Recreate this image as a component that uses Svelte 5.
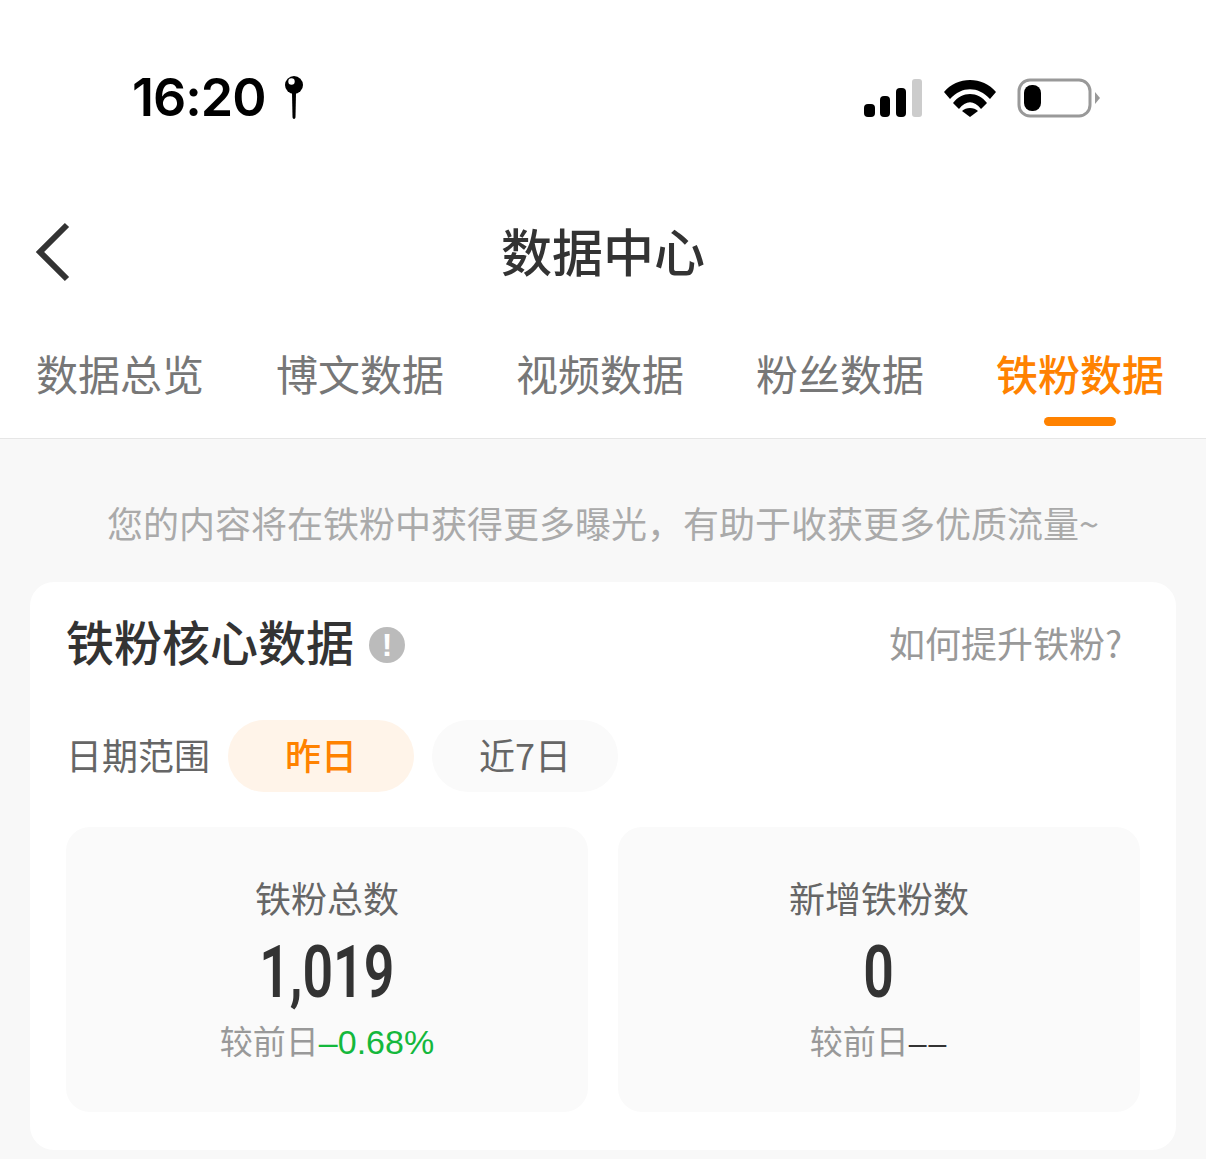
<script>
  const tabs = ['数据总览', '博文数据', '视频数据', '粉丝数据', '铁粉数据'];
  const activeTab = 4;
</script>

<div class="page">
  <div class="status">
    <div class="time">
      <span>16:20</span>
      <svg width="20" height="46" viewBox="0 0 20 46">
        <path d="M8 18h4l-.5 24c-.1 2.600-2.900 2.600-3 0z" fill="#000" />
        <circle cx="10" cy="10" r="9" fill="#000" />
        <circle cx="7.500" cy="6.500" r="3.200" fill="#fff" />
      </svg>
    </div>
    <div class="indicators">
      <svg width="60" height="38" viewBox="0 0 60 38">
        <rect x="1" y="25" width="11" height="13" rx="4" fill="#000" />
        <rect x="17" y="17" width="10" height="21" rx="4" fill="#000" />
        <rect x="33" y="9" width="10" height="29" rx="4" fill="#000" />
        <rect x="49" y="0" width="10" height="38" rx="3" fill="#ccc" />
      </svg>
      <svg width="52" height="38" viewBox="0 0 52 38">
        <path d="M0 13C13-3 39-3 52 13l-6 7C34 7 18 7 6 20z" fill="#000" />
        <path d="M9 24C18 12 34 12 43 24l-6 6C30 21 22 21 15 30z" fill="#000" />
        <path d="M18 32c4-4 12-4 16 0l-8 6z" fill="#000" />
      </svg>
      <svg class="battery" width="84" height="40" viewBox="0 0 84 40">
        <rect x="2" y="2" width="71" height="36" rx="11" fill="#fff" stroke="#999" stroke-width="3" />
        <rect x="7" y="7" width="17" height="26" rx="8" fill="#000" />
        <path d="M78 14l5 6-5 6z" fill="#999" />
      </svg>
    </div>
  </div>

  <header class="nav">
    <svg class="back" width="36" height="60" viewBox="0 0 36 60">
      <path d="M32 3L5 30l27 27" fill="none" stroke="#333" stroke-width="6" />
    </svg>
    <h1>数据中心</h1>
  </header>

  <nav class="tabs">
    {#each tabs as tab, i}
      <div class="tab" class:active={i === activeTab}>{tab}</div>
    {/each}
  </nav>

  <main class="content">
    <p class="notice">您的内容将在铁粉中获得更多曝光，有助于收获更多优质流量~</p>

    <section class="card">
      <div class="card-head">
        <div class="card-title">
          <h2>铁粉核心数据</h2>
          <span class="info">!</span>
        </div>
        <span class="help">如何提升铁粉?</span>
      </div>

      <div class="range">
        <span class="range-label">日期范围</span>
        <span class="pill on">昨日</span>
        <span class="pill">近7日</span>
      </div>

      <div class="stats">
        <div class="stat">
          <div class="stat-name">铁粉总数</div>
          <div class="stat-num"><span>1,019</span></div>
          <div class="stat-sub">较前日<span class="down">–0.68%</span></div>
        </div>
        <div class="stat">
          <div class="stat-name">新增铁粉数</div>
          <div class="stat-num"><span>0</span></div>
          <div class="stat-sub">较前日<span class="none">––</span></div>
        </div>
      </div>
    </section>
  </main>
</div>

<style>
  :global(body) {
    background: #f8f8f8;
  }

  .page {
    width: 1206px;
    height: 1159px;
    overflow: hidden;
    font-family: "Noto Sans CJK SC", "Noto Sans", sans-serif;
    color: #333;
  }

  .status {
    height: 195px;
    padding: 0 107px 0 132px;
    box-sizing: border-box;
    background: #fff;
    display: flex;
    justify-content: space-between;
    align-items: flex-start;
  }

  .time {
    margin-top: 67px;
    display: flex;
    align-items: center;
    gap: 18px;
    font: 600 52px/62px Inter, "Liberation Sans", sans-serif;
    letter-spacing: -1px;
    color: #000;
  }

  .indicators {
    margin-top: 78px;
    display: flex;
    align-items: center;
    gap: 21px;
  }

  .battery {
    margin-right: -2px;
  }

  .nav {
    height: 117px;
    background: #fff;
    display: flex;
    justify-content: center;
    position: relative;
  }

  .back {
    position: absolute;
    left: 35px;
    top: 27px;
  }

  h1 {
    margin: 0;
    font-size: 51px;
    font-weight: 500;
    line-height: 111px;
  }

  .tabs {
    height: 127px;
    box-sizing: border-box;
    background: #fff;
    border-bottom: 1px solid #e6e6e6;
    padding: 0 42px 0 36px;
    display: flex;
    justify-content: space-between;
  }

  .tab {
    width: 168px;
    height: 126px;
    box-sizing: border-box;
    padding-top: 30px;
    text-align: center;
    font-size: 42px;
    line-height: 62px;
    color: #777;
    position: relative;
  }

  .tab.active {
    color: #ff8200;
    font-weight: 500;
  }

  .tab.active::after {
    content: "";
    position: absolute;
    left: 48px;
    width: 72px;
    top: 105px;
    height: 9px;
    border-radius: 5px;
    background: #ff8200;
  }

  .content {
    padding: 0 30px;
  }

  .notice {
    margin: 0;
    height: 143px;
    box-sizing: border-box;
    padding-top: 57px;
    text-align: center;
    font-size: 36px;
    line-height: 52px;
    color: #aaa;
    white-space: nowrap;
  }

  .card {
    height: 568px;
    box-sizing: border-box;
    background: #fff;
    border-radius: 24px;
    padding: 30px 36px 0 36px;
  }

  .card-head {
    display: flex;
    justify-content: space-between;
    height: 62px;
    padding: 0 18px 0 0;
  }

  .card-title {
    display: flex;
    align-items: flex-start;
    gap: 15px;
  }

  h2 {
    margin: 0;
    font-size: 48px;
    font-weight: 500;
    line-height: 56px;
  }

  .info {
    margin-top: 15px;
    width: 36px;
    height: 36px;
    border-radius: 50%;
    background: #bbb;
    color: #fff;
    font: 700 32px/36px "Liberation Sans", sans-serif;
    text-align: center;
  }

  .help {
    font-size: 36px;
    line-height: 60px;
    color: #999;
  }

  .range {
    margin-top: 46px;
    display: flex;
    align-items: flex-start;
    gap: 18px;
  }

  .range-label {
    width: 144px;
    font-size: 36px;
    line-height: 68px;
    color: #666;
    white-space: nowrap;
  }

  .pill {
    width: 186px;
    height: 72px;
    border-radius: 36px;
    background: #fafafa;
    color: #666;
    font-size: 36px;
    line-height: 68px;
    text-align: center;
  }

  .pill.on {
    background: #fff4e9;
    color: #ff8200;
    font-weight: 500;
  }

  .stats {
    margin-top: 35px;
    display: grid;
    grid-template-columns: 522px 522px;
    gap: 30px;
  }

  .stat {
    height: 285px;
    box-sizing: border-box;
    background: #fafafa;
    border-radius: 24px;
    padding-top: 44px;
    text-align: center;
  }

  .stat-name {
    font-size: 36px;
    line-height: 52px;
    color: #666;
  }

  .stat-num {
    height: 95px;
    font: 600 72px/100px Roboto, sans-serif;
    color: #333;
  }

  .stat-num span {
    display: inline-block;
    transform: scaleX(0.745);
  }

  .stat-sub {
    font-size: 33px;
    line-height: 44px;
    color: #999;
  }

  .down {
    color: #14b83c;
    font-family: "Liberation Sans", sans-serif;
    font-size: 34px;
  }

  .none {
    color: #333;
    font-family: "Liberation Sans", sans-serif;
    font-size: 32px;
    letter-spacing: 2px;
  }
</style>
